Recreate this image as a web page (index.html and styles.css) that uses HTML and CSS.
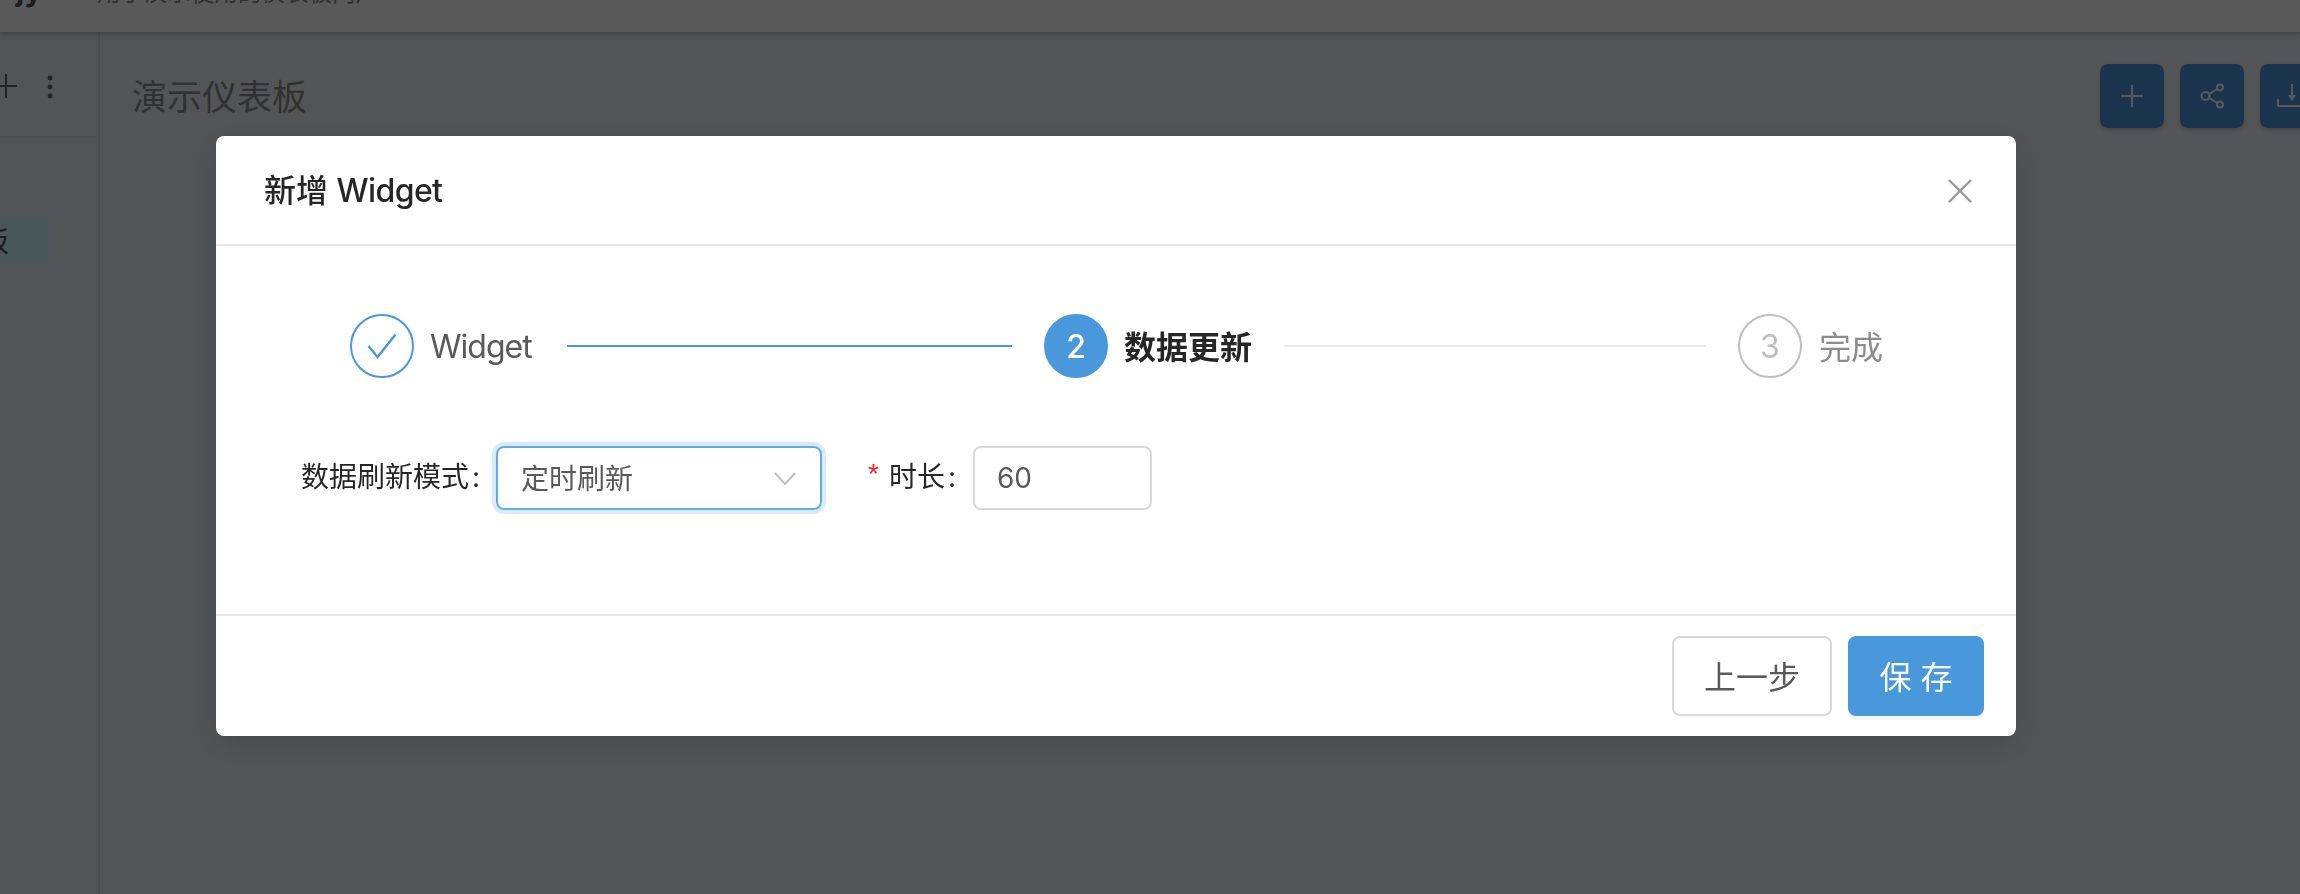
FILE: index.html
```html
<!DOCTYPE html>
<html lang="zh-CN">
<head>
<meta charset="utf-8">
<title>新增 Widget</title>
<link rel="stylesheet" href="styles.css">
</head>
<body>
<div class="page">
  <header class="topbar">
    <span class="brand">jy</span>
    <span class="subtitle">用于演示使用的仪表板门户</span>
  </header>
  <div class="main">
    <aside class="sidebar">
      <div class="side-tools">
        <svg class="side-plus" width="18" height="24" viewBox="0 0 18 24"><path d="M0 12H17M6 0V24" fill="none" stroke="#666" stroke-width="2"/></svg>
        <svg class="side-more" width="6" height="24" viewBox="0 0 6 24"><circle cx="3" cy="3" r="2.4" fill="#666"/><circle cx="3" cy="12" r="2.4" fill="#666"/><circle cx="3" cy="21" r="2.4" fill="#666"/></svg>
      </div>
      <div class="side-item"><span>演示仪表板</span></div>
    </aside>
    <section class="content">
      <h1 class="dash-title">演示仪表板</h1>
      <div class="dash-actions">
        <button class="icon-btn" type="button"><svg width="24" height="24" viewBox="0 0 24 24"><path d="M12 1V23M1 12H23" fill="none" stroke="#fff" stroke-width="2"/></svg></button>
        <button class="icon-btn" type="button"><svg width="24" height="26" viewBox="0 0 24 26"><g fill="none" stroke="#fff" stroke-width="2"><circle cx="5.5" cy="13" r="4"/><circle cx="20" cy="4.5" r="3"/><circle cx="20" cy="21.5" r="3"/><path d="M9 11L17.5 6M9 15L17.5 20"/></g></svg></button>
        <button class="icon-btn" type="button"><svg width="30" height="24" viewBox="0 0 30 24"><g fill="none" stroke="#fff" stroke-width="2"><path d="M1 15V22H29V15M15 0V15"/></g><path d="M11 11H19L15 17Z" fill="#fff"/></svg></button>
      </div>
    </section>
  </div>
</div>
<div class="overlay"></div>
<div class="modal">
  <div class="modal-header">
    <h2 class="modal-title">新增 <span class="latin-title">Widget</span></h2>
    <svg class="modal-close" width="24" height="24" viewBox="0 0 24 24"><path d="M1 1L23 23M23 1L1 23" fill="none" stroke="#999" stroke-width="2.4"/></svg>
  </div>
  <div class="modal-body">
    <div class="steps">
      <div class="step">
        <span class="step-icon step-icon-done"><svg width="30" height="26" viewBox="0 0 30 26"><path d="M1.5 13L10.5 24L28.5 1.5" fill="none" stroke="#4a98dc" stroke-width="2.4"/></svg></span>
        <span class="step-title step-title-latin">Widget</span>
        <span class="step-line step-line-done"></span>
      </div>
      <div class="step">
        <span class="step-icon step-icon-active">2</span>
        <span class="step-title step-title-active">数据更新</span>
        <span class="step-line"></span>
      </div>
      <div class="step step-last">
        <span class="step-icon step-icon-wait">3</span>
        <span class="step-title step-title-wait">完成</span>
      </div>
    </div>
    <form class="form-row">
      <label class="form-label">数据刷新模式<span class="colon">:</span></label>
      <div class="select">
        <span>定时刷新</span>
        <svg width="22" height="13" viewBox="0 0 22 13"><path d="M1 1L11 12L21 1" fill="none" stroke="#bfbfbf" stroke-width="2"/></svg>
      </div>
      <label class="form-label form-label-req"><span class="star">*</span>时长<span class="colon">:</span></label>
      <div class="input">60</div>
    </form>
  </div>
  <div class="modal-footer">
    <button class="btn" type="button">上一步</button>
    <button class="btn btn-primary" type="button">保 存</button>
  </div>
</div>
</body>
</html>
```
FILE: styles.css
```css
* { box-sizing: border-box; }
html, body { margin: 0; height: 100%; overflow: hidden; }
body {
  font-family: Inter, "Noto Sans CJK SC", sans-serif;
  color: #333;
  background: #edf0f6;
}
.page { display: flex; flex-direction: column; height: 894px; width: 2300px; overflow: hidden; }
.topbar {
  flex: none;
  height: 32px;
  background: #fff;
  box-shadow: 0 2px 6px rgba(0, 0, 0, .25);
  display: flex;
  align-items: flex-start;
  overflow: hidden;
  position: relative;
  z-index: 1;
}
.brand { width: 97px; padding-left: 16px; margin-top: -26px; line-height: 32px; font-size: 30px; font-weight: 700; color: #555; flex: none; }
.subtitle { margin-top: -23px; line-height: 32px; font-size: 23.5px; color: #888; white-space: nowrap; }
.main { flex: 1; display: flex; min-height: 0; }
.sidebar { flex: none; width: 100px; border-right: 2px solid #dcdfe4; display: flex; flex-direction: column; align-items: flex-end; }
.side-tools { width: 96px; height: 106px; margin-right: 2px; border-bottom: 2px solid #dcdfe4; display: flex; align-items: flex-start; padding-top: 42px; }
.side-plus { flex: none; margin-right: 29px; }
.side-more { flex: none; margin-top: 1px; }
.side-item { align-self: flex-start; margin-top: 78px; width: 48px; height: 48px; background: #d3fafd; display: flex; justify-content: flex-end; align-items: center; overflow: hidden; padding-right: 39px; font-size: 28px; white-space: nowrap; color: #555; border-radius: 0 4px 4px 0; }
.side-item span { flex: none; }
.content { flex: 1; display: flex; justify-content: space-between; padding: 32px 0 0 32px; min-width: 0; overflow: hidden; }
.dash-title { margin: 8px 0 0; font-size: 35px; line-height: 50px; font-weight: 400; color: #8c8c8c; }
.dash-actions { display: flex; gap: 16px; margin-right: -24px; flex: none; }
.icon-btn { width: 64px; height: 64px; padding: 0; border: 0; border-radius: 8px; background: #4a98dc; display: flex; align-items: center; justify-content: center; box-shadow: 0 2px 4px rgba(0, 0, 0, .15); }
.overlay { position: fixed; inset: 0; background: rgba(0, 0, 0, .65); z-index: 2; }
.modal { position: fixed; left: 216px; top: 136px; width: 1800px; height: 600px; background: #fff; border-radius: 8px; box-shadow: 0 8px 32px rgba(0, 0, 0, .15); z-index: 3; display: flex; flex-direction: column; }
.modal-header { flex: none; height: 110px; border-bottom: 2px solid #e8e8e8; padding: 0 44px 0 48px; display: flex; align-items: center; justify-content: space-between; }
.modal-title { margin: 0 0 4px; font-size: 32px; font-weight: 500; color: #262626; }
.latin-title { letter-spacing: -.6px; }
.modal-close { margin-top: 2px; }
.modal-body { flex: 1; padding: 68px 133px 0 134px; }
.steps { display: flex; }
.step { flex: 1; display: flex; align-items: center; margin-right: 32px; }
.step-last { flex: none; margin-right: 0; }
.step-icon { flex: none; width: 64px; height: 64px; border-radius: 50%; display: flex; align-items: center; justify-content: center; font-size: 32px; border: 2px solid #4a98dc; }
.step-icon-active { background: #4a98dc; color: #fff; font-weight: 500; }
.step-icon-wait { border-color: #bfbfbf; color: #bfbfbf; }
.step-title { flex: none; margin: -2px 0 0 16px; font-size: 32px; color: #595959; }
.step-title-latin { letter-spacing: -1px; margin-top: 0; }
.step-title-active { font-weight: 700; color: #262626; }
.step-title-wait { margin-left: 17px; color: #8c8c8c; }
.step-line { flex: 1; height: 2px; margin-left: 32px; background: #e8e8e8; }
.step-line-done { margin-left: 35px; background: #4a98dc; }
.form-row { display: flex; align-items: center; margin-top: 68px; margin-left: -49px; }
.form-label { flex: none; font-size: 28px; line-height: 40px; padding-bottom: 2px; color: #262626; display: flex; align-items: center; }
.colon { margin: 0 16px 0 3px; }
.select { flex: none; width: 326px; height: 64px; border: 2px solid #5dade6; border-radius: 8px; box-shadow: 0 0 0 4px rgba(74, 152, 220, .2); display: flex; align-items: center; justify-content: space-between; padding: 0 24px 0 23px; font-size: 28px; color: #595959; }
.select span { margin-top: -2px; }
.form-label-req { margin-left: 43px; }
.star { color: #f5222d; margin-right: 7px; font-family: "Liberation Mono", monospace; }
.input { flex: none; width: 179px; height: 64px; margin-left: 1px; border: 2px solid #d9d9d9; border-radius: 8px; display: flex; align-items: center; padding: 0 22px; font-size: 28px; color: #595959; }
.modal-footer { flex: none; height: 122px; border-top: 2px solid #e8e8e8; padding: 20px 32px 0; display: flex; justify-content: flex-end; gap: 16px; }
.btn { width: 160px; height: 80px; padding: 0 0 2px; border: 2px solid #d9d9d9; border-radius: 8px; background: #fff; font-family: inherit; font-size: 32px; color: #595959; box-shadow: 0 2px 0 rgba(0, 0, 0, .015); }
.btn-primary { width: 136px; background: #4a98dc; border-color: #4a98dc; color: #fff; box-shadow: 0 4px 0 rgba(0, 0, 0, .045); }
```
